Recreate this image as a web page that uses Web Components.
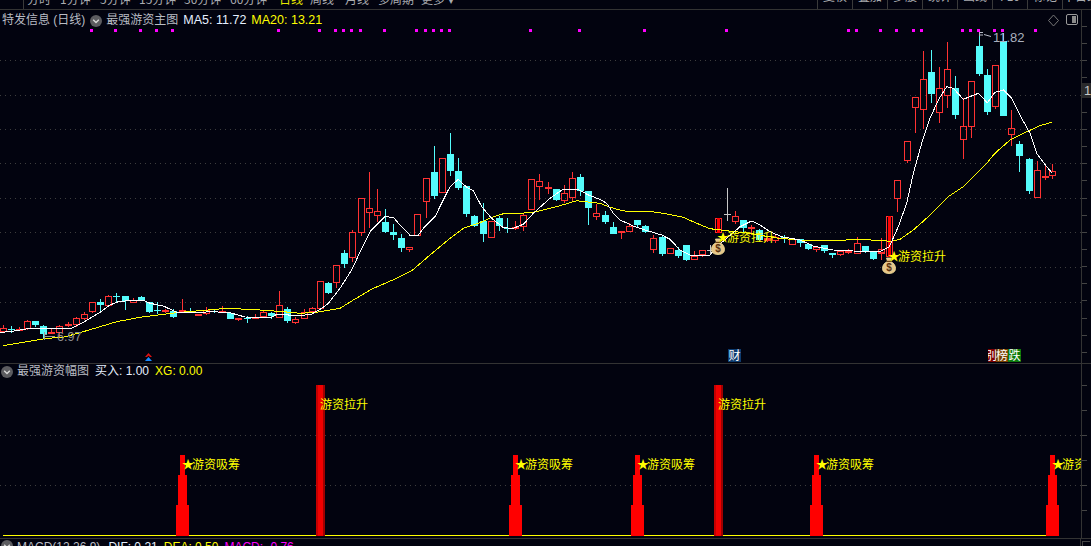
<!DOCTYPE html>
<html><head><meta charset="utf-8"><style>
html,body{margin:0;padding:0;background:#02030f;overflow:hidden}
body{font:12px "Liberation Sans","Noto Sans CJK SC",sans-serif}
</style></head><body>
<kline-app>
  <top-bar>
    <bar-item slot="left" w="24" class="first"></bar-item>
    <bar-item slot="left" w="33">分时</bar-item>
    <bar-item slot="left" w="40">1分钟</bar-item>
    <bar-item slot="left" w="39">5分钟</bar-item>
    <bar-item slot="left" w="45">15分钟</bar-item>
    <bar-item slot="left" w="46">30分钟</bar-item>
    <bar-item slot="left" w="49">60分钟</bar-item>
    <bar-item slot="left" w="31" hot>日线</bar-item>
    <bar-item slot="left" w="35">周线</bar-item>
    <bar-item slot="left" w="33">月线</bar-item>
    <bar-item slot="left" w="43">多周期</bar-item>
    <bar-item slot="left" w="36">更多 ▾</bar-item>
    <bar-item slot="right" w="35" sep>复权</bar-item>
    <bar-item slot="right" w="35" sep>叠加</bar-item>
    <bar-item slot="right" w="35" sep>多股</bar-item>
    <bar-item slot="right" w="35" sep>统计</bar-item>
    <bar-item slot="right" w="35" sep>画线</bar-item>
    <bar-item slot="right" w="35" sep>F10</bar-item>
    <bar-item slot="right" w="35" sep>标记</bar-item>
    <bar-item slot="right" w="35" sep>十日线</bar-item>
  </top-bar>
  <chart-pane h="353" price>
    <pane-legend slot="legend" style="padding:3px 0 0 2px">
      <legend-text c="#b9bcc4" style="margin-right:5px">特发信息 (日线)</legend-text>
      <legend-toggle style="margin-right:4px"></legend-toggle>
      <legend-text c="#b9bcc4" style="margin-right:5px">最强游资主图</legend-text>
      <legend-text c="#e6f0ff" style="margin-right:5px;font-size:12.5px">MA5: 11.72</legend-text>
      <legend-text c="#ffff00" style="font-size:12.5px">MA20: 13.21</legend-text>
    </pane-legend>
    <main-chart slot="chart"></main-chart>
  </chart-pane>
  <chart-pane h="174">
    <pane-legend slot="legend" style="padding:0 0 0 1px">
      <legend-toggle style="margin-right:4px"></legend-toggle>
      <legend-text c="#b9bcc4" style="margin-right:6px">最强游资幅图</legend-text>
      <legend-text c="#e6f0ff" style="margin-right:6px">买入: 1.00</legend-text>
      <legend-text c="#ffff00">XG: 0.00</legend-text>
    </pane-legend>
    <signal-chart slot="chart"></signal-chart>
  </chart-pane>
  <macd-strip>
    <legend-toggle style="margin-right:4px"></legend-toggle>
    <legend-text c="#b9bcc4" style="margin-right:8px">MACD(12,26,9)</legend-text>
    <legend-text c="#e6f0ff" style="margin-right:6px">DIF: 0.21</legend-text>
    <legend-text c="#ffff00" style="margin-right:6px">DEA: 0.50</legend-text>
    <legend-text c="#ff00ff">MACD: -0.76</legend-text>
  </macd-strip>
</kline-app>
<script>
const CJK='"Noto Sans CJK SC","Liberation Sans",sans-serif';
function mk(tag,html){customElements.define(tag,class extends HTMLElement{
  constructor(){super();this.attachShadow({mode:'open'}).innerHTML=html;}
});}
mk('kline-app',`<style>:host{display:flex;flex-direction:column;width:1091px;height:546px;overflow:hidden;background:#02030f;color:#b9bcc4}</style><slot></slot>`);
mk('top-bar',`<style>:host{display:flex;justify-content:space-between;height:9px;border-bottom:1px solid #333;overflow:hidden;align-items:flex-end;flex:none}
.l,.r{display:flex;align-items:flex-end;height:9px;padding-bottom:3px;box-sizing:border-box}.r{width:274px;overflow:visible}</style>
<div class="l"><slot name="left"></slot></div><div class="r"><slot name="right"></slot></div>`);
customElements.define('bar-item',class extends HTMLElement{
  constructor(){super();this.attachShadow({mode:'open'}).innerHTML=`<style>:host{display:block;flex:none;line-height:14px;height:14px;font:12px/14px ${CJK};color:#a9abb0;white-space:nowrap;box-sizing:border-box}
  :host([hot]){color:#e8e800}:host([sep]){border-left:1px solid #3a3a3a;text-align:center;height:20px;margin-bottom:-3px}
  :host(.first){border-right:1px solid #3a3a3a;margin-bottom:-3px;height:20px;margin-right:3px}</style><slot></slot>`;}
  connectedCallback(){this.style.width=this.getAttribute('w')+'px';}
});
customElements.define('chart-pane',class extends HTMLElement{
  constructor(){super();this.attachShadow({mode:'open'}).innerHTML=`<style>:host{display:flex;flex:none;border-bottom:1px solid #333;box-sizing:content-box}
  .c{position:relative;width:1081px;overflow:hidden}.a{width:9px;border-left:1px solid #333;position:relative;overflow:hidden}
  .lg{position:absolute;left:0;top:0;right:0;z-index:2}
  svg{display:block}#p{position:absolute;left:0;width:10px;top:73px;height:15px;background:#2a2a2c;color:#c8c8c8;font:13px/15px "Liberation Sans",sans-serif;padding-left:2px;white-space:nowrap}</style>
  <div class="c"><div class="lg"><slot name="legend"></slot></div><slot name="chart"></slot></div><div class="a"><svg id="t" width="9"></svg></div>`;}
  connectedCallback(){
    const h=+this.getAttribute('h');this.style.height=h+'px';
    const a=this.shadowRoot.querySelector('.a'),t=this.shadowRoot.getElementById('t');t.setAttribute('height',h);
    let s='';
    if(this.hasAttribute('price')){for(let y=16;y<h;y+=17.15)s+=`<rect x="0" y="${Math.round(y)}" width="5" height="1" fill="#444"/>`;
      const p=document.createElement('div');p.id='p';p.textContent='13';a.appendChild(p);}
    else{for(const y of [385,410,435,460,485,510])s+=`<rect x="0" y="${y-364}" width="5" height="1" fill="#444"/>`;}
    t.innerHTML=s;
  }
});
mk('pane-legend',`<style>:host{display:flex;align-items:center;height:15px;white-space:nowrap}</style><slot></slot>`);
customElements.define('legend-text',class extends HTMLElement{
  constructor(){super();this.attachShadow({mode:'open'}).innerHTML=`<style>:host{display:block;font-family:"Liberation Sans","Noto Sans CJK SC",sans-serif;font-size:12px;line-height:15px;white-space:nowrap}</style><slot></slot>`;}
  connectedCallback(){this.style.color=this.getAttribute('c');}
});
mk('legend-toggle',`<style>:host{display:block;width:12px;height:12px;flex:none}svg{display:block}</style><svg width="12" height="12" viewBox="0 0 12 12"><circle cx="6" cy="6" r="6" fill="#5c5c60"/><path d="M3.2 4.800 6 7.600 8.800 4.800" fill="none" stroke="#d8d8d8" stroke-width="1.400"/></svg>`);
mk('macd-strip',`<style>:host{display:flex;height:7px;overflow:hidden;flex:none}
.m{display:flex;align-items:flex-start;width:1080px;padding:1px 0 0 1px;box-sizing:border-box}
.a{width:9px;border-left:1px solid #333;overflow:hidden}.a i{display:block;margin:2px 0 0 1px;height:12px;border:1px solid #444;border-right:0}</style>
<div class="m"><slot></slot></div><div class="a"><i></i></div>`);

// Candles traced from the reference: x, bodyTop, bodyBottom, wickTop, wickBottom, type, in crops scaled 3x
const sets=[
 [0,270,`10 175 185 165 190 r|34 178 180 168 188 c|58 177 181 170 183 R|82 153 177 150 180 r|106 153 165 153 172 c|130 168 192 165 208 c|154 186 190 175 192 R|178 168 190 165 200 r|205 161 166 155 170 R|229 144 164 140 170 r|253 132 147 125 150 r|277 97 125 95 128 r|301 97 104 88 128 c|325 79 107 75 110 r|349 78 80 68 95 c|376 78 93 78 120 c|400 90 98 85 100 r|424 82 90 78 92 c|448 97 125 95 128 c|472 119 121 95 132 c|496 121 125 118 130 R|520 122 140 118 143 c|547 121 124 87 130 R|571 125 128 114 130 c|595 131 136 131 138 R|619 121 131 112 135 r|643 124 127 120 130 c|667 122 124 108 127 R|691 128 147 128 147 c|715 145 149 143 153 R|741 143 147 137 158 c|766 140 145 132 148 R|790 126 140 124 145 r|814 129 137 125 148 c|838 106 143 63 145 r|862 118 152 112 158 c|886 148 158 142 163 r|913 127 146 118 148 r|937 115 125 112 130 r|961 34 117 34 118 r|985 40 68 35 72 c|1009 -15 38 -15 55 r`],
 [300,130,`133 370 402 360 414 c|157 307 383 300 395 r|184 205 308 205 318 r|208 235 248 126 295 r|232 244 257 177 275 r|256 276 306 237 308 c|280 306 315 282 330 c|304 324 354 312 366 c|328 352 359 352 366 r|352 252 317 252 318 r|379 145 215 145 264 r|403 126 198 48 207 c|427 85 188 85 189 r|451 72 123 9 138 c|475 123 174 84 180 c|499 168 252 168 261 c|523 258 288 255 291 c|550 273 312 219 336 c|574 273 323 273 324 r|598 264 288 258 303 c|622 294 296 264 309 c|646 292 298 273 300 r|670 255 290 252 303 r|694 148 239 148 240 r|718 154 172 132 210 r|745 171 176 156 192 R|769 178 210 178 213 c|793 190 212 166 219 r|817 145 203 126 213 r|841 141 183 132 198 c|865 183 233 183 285 c|889 250 260 222 270 r|916 255 275 243 282 c|940 292 312 276 312 c`],
 [600,170,`64 184 190 182 207 r|88 168 185 160 187 r|112 150 165 150 170 c|136 168 185 165 190 c|160 204 239 195 248 r|187 201 252 195 258 c|211 235 252 235 252 r|235 240 258 232 264 c|259 225 270 225 273 c|283 259 269 244 270 r|307 241 255 240 262 r|331 239 241 225 255 g|355 144 188 144 188 B|382 132 134 54 153 g|406 139 156 124 162 r|430 150 175 150 185 c|454 171 176 165 195 R|478 180 210 178 214 c|502 205 214 200 216 R|526 201 213 195 220 r|553 200 203 195 218 c|577 207 224 207 224 r|601 207 218 207 230 c|625 222 237 222 240 c|649 232 240 232 246 r|673 226 242 226 248 c|697 250 255 250 263 c|721 244 255 244 258 r|745 244 250 238 252 r|772 220 251 201 251 r|796 228 243 228 245 c|820 245 267 243 270 c|844 238 251 205 270 r`],
 [850,30,`22 640 671 622 672 r|46 648 663 648 668 c|70 664 687 662 690 c|94 658 670 625 690 r|118 558 680 558 680 B|142 451 506 451 546 r|170 334 392 334 398 r|194 202 233 202 310 r|218 148 239 64 297 r|242 126 192 60 220 c|266 175 248 111 279 r|290 118 197 36 234 r|314 174 255 138 268 c|340 289 329 205 387 r|364 154 290 154 324 r|388 48 132 6 138 c|412 135 246 117 255 c|436 106 231 106 237 r|460 33 258 9 258 c|484 295 314 240 348 r|508 342 378 334 426 c|536 387 483 384 492 c|560 421 503 393 503 r|584 438 443 403 449 R|607 424 437 402 447 r`]
];
const RED='#ff3232',CY='#54fcfc',GREY='#c8c8c8';
function candleSVG(){
  let s='';
  for(const [ox,oy,str] of sets){
    for(const item of str.split('|')){
      const p=item.split(' ');const t=p[5];
      const x=Math.round(ox+p[0]/3),top=Math.round(oy+p[1]/3),bot=Math.round(oy+p[2]/3),wt=Math.round(oy+p[3]/3),wb=Math.round(oy+p[4]/3);
      const h=Math.max(bot-top,1);
      if(t==='c'){
        s+=`<rect x="${x}" y="${wt}" width="1" height="${wb-wt}" fill="${CY}"/><rect x="${x-3}" y="${top}" width="7" height="${h}" fill="${CY}"/>`;
      }else if(t==='g'){
        s+=`<rect x="${x}" y="${wt}" width="1" height="${wb-wt}" fill="${GREY}"/><rect x="${x-3}" y="${top}" width="7" height="1" fill="${GREY}"/>`;
      }else if(t==='R'){
        s+=`<rect x="${x}" y="${wt}" width="1" height="${wb-wt}" fill="${RED}"/><rect x="${x-3}" y="${top}" width="7" height="${Math.max(h,2)}" fill="${RED}"/>`;
      }else{
        if(top>wt)s+=`<rect x="${x}" y="${wt}" width="1" height="${top-wt}" fill="${RED}"/>`;
        if(wb>bot)s+=`<rect x="${x}" y="${bot}" width="1" height="${wb-bot}" fill="${RED}"/>`;
        s+=`<rect x="${x-2.5}" y="${top+.5}" width="6" height="${h-1}" fill="none" stroke="${RED}" stroke-width="1"/>`;
        if(t==='B')s+=`<rect x="${x-1}" y="${top}" width="3" height="${h}" fill="#ff0000"/>`;
      }
    }
  }
  return s;
}
function pts(ox,oy,str){return str.trim().split(/\s+/).map(a=>{const [x,y]=a.split(',');return ((ox+x/3).toFixed(1))+','+((oy+y/3).toFixed(1));}).join(' ');}
const WHITE=[pts(0,270,'0,187 30,185 60,180 90,175 130,174 215,174 245,160 270,145 300,127 330,105 355,95 385,92 430,90 450,100 490,108 530,127 570,128 640,125 690,128 735,141 815,142 830,133 900,137 935,132 965,115 985,100 1020,55'),
 pts(300,130,'155,420 185,355 210,305 255,260 280,262 300,285 330,316 355,316 370,295 405,260 430,210 450,170 475,148 500,172 520,182 545,230 575,265 610,293 640,295 670,283 700,250 750,205 790,177 830,177 870,197'),
 pts(600,170,'0,88 20,100 40,130 60,150 100,168 135,180 185,195 210,208 240,240 270,255 330,255 350,230 380,205 420,170 455,153 480,165 510,185 545,200 600,210 640,228 700,240 760,243 840,245'),
 pts(850,30,'118,650 145,590 170,520 190,430 215,340 240,265 265,210 290,170 310,175 340,208 385,190 412,218 435,187 460,180 485,205 515,265 540,310 560,370 590,410 607,430')].join(' ');
const YEL=[pts(0,270,'10,227 50,220 100,212 140,205 190,202 250,185 300,170 350,155 420,142 490,133 540,127 600,122 680,115 780,120 850,125 900,130 950,127 1020,115 1065,87 1116,57 1185,27'),
 pts(300,130,'338,420 390,375 450,325 490,295 540,278 580,260 615,250 660,250 700,247 770,230 830,212'),
 pts(600,170,'0,100 30,112 60,120 80,124 150,124 200,132 250,142 290,160 330,176 380,182 450,190 530,204 600,210 680,213 780,208 860,213'),
 pts(850,30,'118,635 150,628 190,600 235,560 295,500 340,470 410,400 435,370 480,330 530,305 570,287 605,277')].join(' ');
const DOTS=[261,329,400,446,492,794,911,956,979,1002,1027,1096,1188,1213,1236,1258,1281].map(v=>v/2.851)
 .concat([91,238,433,679].map(v=>500+v/3))
 .concat([445,470,541,589,640,664,787,811,835,883,907,1006].map(v=>700+v/3));
function bag(cx,cy){return `<g transform="translate(${cx} ${cy})"><path d="M-2.500 -8 L2.500 -8 L1.500 -4.500 C5 -3 6.500 -0.500 6.500 2.500 C6.500 6 3.500 7.500 0 7.500 C-3.500 7.500 -6.500 6 -6.500 2.500 C-6.500 -0.500 -5 -3 -1.500 -4.500 Z" fill="#e6c68a" stroke="#f6e49a" stroke-width=".8"/><path d="M-2.300 -4.600 H2.300" stroke="#6a3f10" stroke-width="1.200"/><text x="0" y="5.400" text-anchor="middle" font-size="10" font-weight="bold" font-family="Liberation Sans" fill="#5a3310">$</text></g>`;}
function sig(x,y,t,star){const f=`font-family='${CJK.replace(/"/g,"")}'`;
  return `<text x="${x}" y="${y}" font-size="12" ${f} fill="#ffff00">${star?'★<tspan dx="-2">'+t+'</tspan>':t}</text>`;}
customElements.define('main-chart',class extends HTMLElement{
  constructor(){super();const r=this.attachShadow({mode:'open'});
    let grid='';for(const y of [60,95,129,163,198,232,267,302])grid+=`<line x1="0" x2="1081" y1="${y}.5" y2="${y}.5" stroke="#3d3d3d" stroke-dasharray="1 4"/>`;
    r.innerHTML=`<style>:host{display:block;width:1081px;height:353px}svg{display:block}text{white-space:pre}</style>
    <svg width="1081" height="353" viewBox="0 10 1081 353">
      ${grid}
      <path d="M1053.500 15 1058.500 20.500 1053.500 26 1048.500 20.500Z" fill="none" stroke="#777"/>
      <rect x="1066.500" y="14.500" width="11" height="10" rx="1.500" fill="none" stroke="#9a9a9a"/>
      <rect x="1072" y="16" width="4" height="7" fill="#8a8a8a"/>
      <g shape-rendering="crispEdges">${candleSVG()}</g>
      <polyline points="${YEL}" fill="none" stroke="#ffff00" stroke-width="1" shape-rendering="crispEdges"/>
      <polyline points="${WHITE}" fill="none" stroke="#ffffff" stroke-width="1" shape-rendering="crispEdges"/>
      <g fill="#ff00ff">${DOTS.map(v=>`<rect x="${Math.round(v-1.5)}" y="29" width="3" height="3"/>`).join('')}</g>
      <path d="M979.500 32V36M979.500 32.500H983M979.500 35H983M984 34.500 991 36.500" stroke="#b8bcc8" fill="none"/>
      <text x="993" y="42" font-size="13" font-family="Liberation Sans" fill="#a9b0be">11.82</text>
      <path d="M44.500 332V340M44.500 336.500H55M44.500 334.500H47" stroke="#9a9a9a" fill="none"/>
      <text x="57" y="341" font-size="12.500" font-family="Liberation Sans" fill="#8f8f8f">6.97</text>
      ${bag(718,247)}${bag(889,266)}
      ${sig(717,242,'游资拉升',1)}${sig(888,261,'游资拉升',1)}
      <path d="M145 357 148.500 353 152 357 150 357 148.500 355.500 147 357Z" fill="#e01010"/>
      <path d="M145 361 148.500 357 152 361Z" fill="#1a8cff"/>
      <rect x="728" y="349" width="13" height="13" fill="#0d3b6e"/>
      <text x="728.500" y="360" font-size="12" font-family='Noto Sans CJK SC' fill="#fff">财</text>
      <rect x="988" y="349" width="8" height="13" fill="#7a0000"/>
      <svg x="988" y="349" width="8" height="13" viewBox="988 349 8 13"><text x="985" y="360" font-size="12" font-family='Noto Sans CJK SC' fill="#fff">别</text></svg>
      <rect x="996" y="349" width="12" height="13" fill="#7a4200"/>
      <text x="996" y="360" font-size="12" font-family='Noto Sans CJK SC' fill="#fff">榜</text>
      <rect x="1008" y="349" width="13" height="13" fill="#0b7a0b"/>
      <text x="1008.500" y="360" font-size="12" font-family='Noto Sans CJK SC' fill="#fff">跌</text>
    </svg>`;}
});
customElements.define('signal-chart',class extends HTMLElement{
  constructor(){super();const r=this.attachShadow({mode:'open'});
    let bars='';
    for(const c of [182,515,637,816,1052]){
      bars+=`<rect x="${c-2}" y="455" width="5" height="20" fill="#f00"/><rect x="${c-4}" y="475" width="9" height="30" fill="#f00"/><rect x="${c-6}" y="505" width="13" height="31" fill="#f00"/>`;
      bars+=sig(c,468.5,'游资吸筹',1);
    }
    let tall='';
    for(const x of [316,714]){
      tall+=`<rect x="${x}" y="385" width="9" height="151" fill="url(#g)"/>`;
      tall+=sig(x+4,408.5,'游资拉升',0);
    }
    r.innerHTML=`<style>:host{display:block;width:1081px;height:174px}svg{display:block}</style>
    <svg width="1081" height="174" viewBox="0 364 1081 174">
      <defs><linearGradient id="g" x1="0" x2="1" y1="0" y2="0"><stop offset="0" stop-color="#c40000"/><stop offset=".25" stop-color="#c40000"/><stop offset=".26" stop-color="#f00000"/><stop offset=".74" stop-color="#f00000"/><stop offset=".75" stop-color="#a00000"/><stop offset="1" stop-color="#a00000"/></linearGradient></defs>
      <line x1="0" x2="1081" y1="435.500" y2="435.500" stroke="#3d3d3d" stroke-dasharray="1 4"/>
      <line x1="0" x2="1081" y1="485.500" y2="485.500" stroke="#3d3d3d" stroke-dasharray="1 4"/>
      <rect x="3" y="535" width="1049" height="1" fill="#ffff00"/>
      ${bars}${tall}
    </svg>`;}
});
</script>
</body></html>
